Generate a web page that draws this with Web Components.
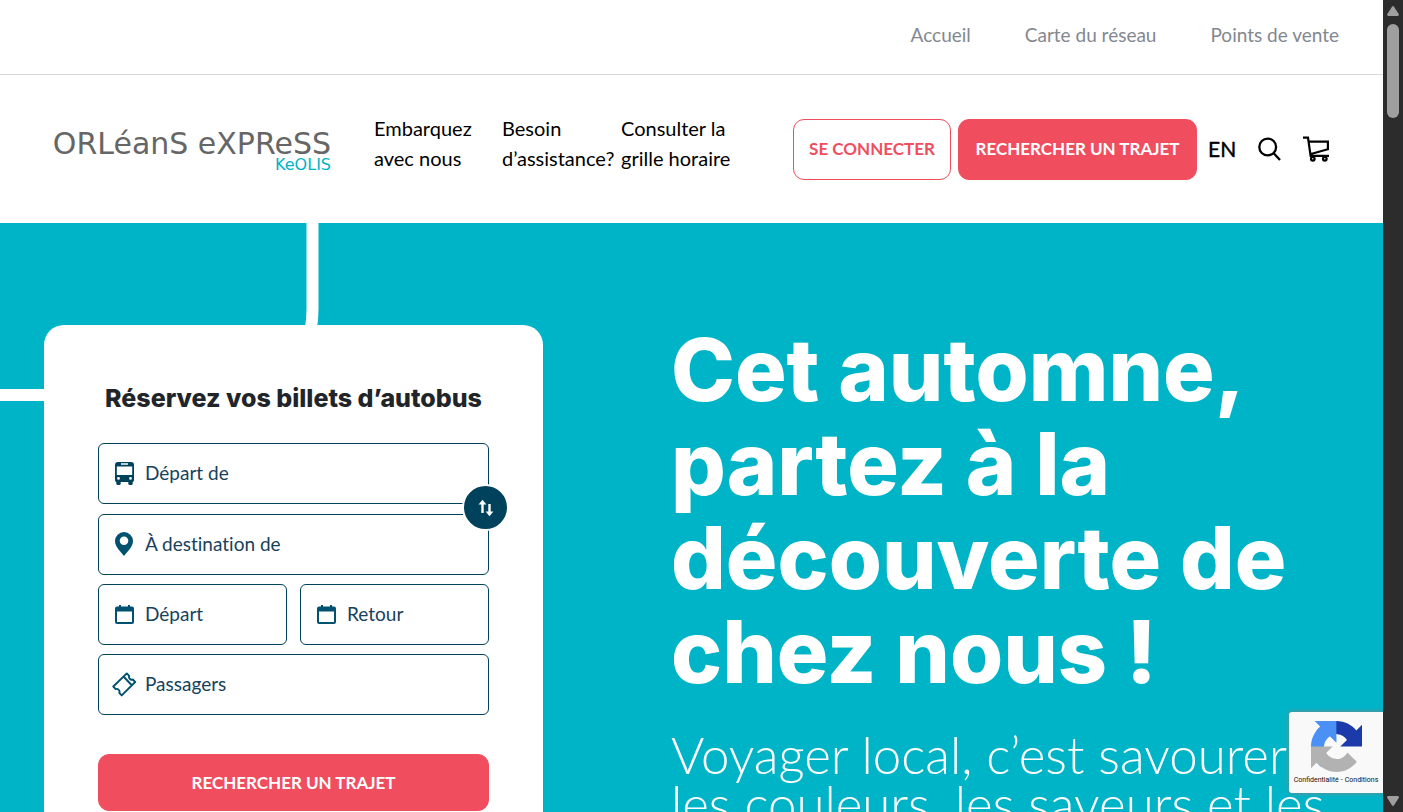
<!DOCTYPE html>
<html lang="fr">
<head>
<meta charset="utf-8">
<meta name="viewport" content="width=device-width, initial-scale=1">
<title>Orléans Express</title>
<style>
  html, body { margin: 0; height: 100%; }
  body { font-family: Lato, "Open Sans", sans-serif; font-size: 19px; line-height: 30px; font-variant-ligatures: none; color: #000; background: #fff; overflow: hidden; }
</style>
</head>
<body>
<oe-page></oe-page>

<script>
const define = (name, html) => {
  const tpl = document.createElement('template');
  tpl.innerHTML = html;
  customElements.define(name, class extends HTMLElement {
    constructor() {
      super();
      this.attachShadow({ mode: 'open' }).append(tpl.content.cloneNode(true));
    }
    connectedCallback() {
      const input = this.shadowRoot.querySelector('input[data-field]');
      if (input) {
        input.placeholder = this.getAttribute('label');
        input.setAttribute('aria-label', this.getAttribute('label'));
        input.name = this.getAttribute('name');
      }
    }
  });
};

define('oe-topbar', `
<style>
  :host { display: block; border-bottom: 1px solid #d6d8da; }
  nav { display: flex; justify-content: flex-end; align-items: center; gap: 54px; height: 70px; padding: 0 44px 4px; }
  a { color: #83888f; text-decoration: none; }
</style>
<nav aria-label="Liens secondaires">
  <a href="#accueil">Accueil</a><a href="#carte">Carte du réseau</a><a href="#points">Points de vente</a>
</nav>`);

define('oe-logo', `
<style>
  :host { display: block; }
  a { display: flex; flex-direction: column; align-items: flex-end; padding-top: 4px; text-decoration: none; font-family: "DejaVu Sans", sans-serif; color: #666; white-space: nowrap; }
  .name { font-size: 30px; line-height: 28px; }
  .sub { font-size: 16px; line-height: 14px; color: #00b4c7; }
</style>
<a href="#accueil"><span class="name">ORLéanS eXPReSS</span><span class="sub">KeOLIS</span></a>`);

define('oe-button', `
<style>
  :host { display: block; }
  button { box-sizing: border-box; width: 100%; height: var(--button-height, 61px); padding: 0 14px; border: 1px solid #f04e5e; border-radius: 11px; background: #f04e5e; color: #fff; font: 700 17px/24px Lato, sans-serif; white-space: nowrap; cursor: pointer; }
  :host([outline]) button { background: #fff; color: #f04e5e; }
</style>
<button type="button"><slot></slot></button>`);

define('oe-header', `
<style>
  :host { display: flex; align-items: center; box-sizing: border-box; min-height: 148px; padding: 0 53px 0 46px; }
  oe-logo { width: 285px; margin-right: 43px; }
  nav { display: grid; grid-template-columns: 128px 119px 120px; margin-right: auto; padding-bottom: 12px; font-size: 20px; }
  nav a { color: #000; text-decoration: none; }
  .actions { display: flex; align-items: center; gap: 7px; }
  oe-button:nth-child(1) { width: 158px; }
  oe-button:nth-child(2) { width: 239px; }
  .tools { display: flex; align-items: center; gap: 22px; margin-left: 11px; }
  .tools a { font-size: 21px; color: #000; text-decoration: none; width: 28px; -webkit-text-stroke: 0.4px #000; }
  .tools button { display: flex; padding: 0; border: 0; background: none; cursor: pointer; }
</style>
<oe-logo></oe-logo>
<nav aria-label="Navigation principale">
  <a href="#embarquez">Embarquez<br>avec nous</a>
  <a href="#assistance">Besoin<br>d’assistance?</a>
  <a href="#horaire">Consulter la<br>grille horaire</a>
</nav>
<div class="actions">
  <oe-button outline>SE CONNECTER</oe-button>
  <oe-button>RECHERCHER UN TRAJET</oe-button>
</div>
<div class="tools">
  <a href="#en" lang="en">EN</a>
  <button type="button" aria-label="Rechercher">
    <svg width="23" height="24" viewBox="0 0 23 24" fill="none" stroke="#000" stroke-width="2.3"><circle cx="9.700" cy="10" r="8.400"/><path d="M15.700 16.200 22 23"/></svg>
  </button>
  <button type="button" aria-label="Panier">
    <svg width="27" height="26" viewBox="0 0 27 26" fill="none" stroke="#000" stroke-width="2.2"><path d="M0 1.700h5l2.600 18.200H26M5.600 5.600h19.300v7.600L7 18.200"/><circle cx="9.800" cy="22.800" r="1.800"/><circle cx="21.800" cy="22.800" r="1.800"/></svg>
  </button>
</div>`);

define('oe-field', `
<style>
  :host { display: block; min-width: 0; }
  label { box-sizing: border-box; display: flex; align-items: center; gap: 8px; height: 61px; padding: 0 14px 0 13px; border: 1px solid #00425c; border-radius: 6px; background: #fff; }
  .icon { display: flex; flex: none; padding-bottom: 1px; }
  input { flex: 1; min-width: 0; padding: 0 0 2px; border: 0; outline: 0; background: none; color: #00425c; font: 400 19px/30px Lato, sans-serif; font-variant-ligatures: none; }
  input::placeholder { color: #17415c; opacity: 1; }
</style>
<label><span class="icon"><slot></slot></span><input type="text" data-field></label>`);

define('oe-booking', `
<style>
  :host { display: block; box-sizing: border-box; background: #fff; border-radius: 20px; padding: 54px 54px 40px; }
  h2 { margin: 0 0 25px; font-family: Inter, Lato, sans-serif; font-size: 25px; line-height: 39px; font-weight: 800; color: #212529; text-align: center; white-space: nowrap; }
  form { display: grid; grid-template-columns: 1fr 1fr; column-gap: 13px; row-gap: 9px; }
  .route { position: relative; grid-column: 1 / -1; display: grid; row-gap: 10px; }
  .swap { position: absolute; right: -20px; top: 50%; margin-top: -25px; box-sizing: border-box; width: 47px; height: 47px; padding: 0; border: 2px solid #fff; border-radius: 50%; background: #00425c; display: flex; align-items: center; justify-content: center; cursor: pointer; }
  .wide { grid-column: 1 / -1; }
  oe-button { grid-column: 1 / -1; margin-top: 30px; --button-height: 57px; }
</style>
<h2>Réservez vos billets d’autobus</h2>
<form>
  <div class="route">
    <oe-field label="Départ de" name="depart_de">
      <svg width="25" height="26" viewBox="0 0 25 26"><path fill="#00425c" fill-rule="evenodd" d="M6 2h13c2 0 3 1.200 3 3v15c0 1-.6 1.600-1.300 2v1.500a1.500 1.500 0 0 1-1.500 1.500h-1.400a1.500 1.500 0 0 1-1.500-1.500V22H8.700v1.500A1.500 1.500 0 0 1 7.200 25H5.800a1.500 1.500 0 0 1-1.500-1.500V22C3.600 21.600 3 21 3 20V5c0-1.800 1-3 3-3Zm3 1.300v1.500h7V3.300ZM4.800 6.500V15h15.400V6.500ZM6.500 17a1.400 1.400 0 1 0 0 2.800 1.400 1.400 0 0 0 0-2.800Zm12 0a1.400 1.400 0 1 0 0 2.800 1.400 1.400 0 0 0 0-2.800Z"/></svg>
    </oe-field>
    <oe-field label="À destination de" name="destination">
      <svg width="25" height="26" viewBox="0 0 25 26"><path fill="#005270" fill-rule="evenodd" d="M12 1a9 9 0 0 1 9 9c0 6-6 11-9 15-3-4-9-9-9-15a9 9 0 0 1 9-9Zm0 4.500a4.300 4.300 0 1 0 0 8.600 4.300 4.300 0 0 0 0-8.600Z"/></svg>
    </oe-field>
    <button class="swap" type="button" aria-label="Inverser le départ et la destination">
      <svg width="16" height="18" viewBox="0 0 16 18" fill="none" stroke="#fff" stroke-width="2.400"><path d="M4.500 14V4M11.500 5v10"/><path fill="#fff" stroke="none" d="M4.500.8 8.400 5.600H.6ZM11.500 17.200 7.600 12.400h7.800Z"/></svg>
    </button>
  </div>
  <oe-field label="Départ" name="date_depart">
    <svg width="25" height="26" viewBox="0 0 25 26"><path fill="#005270" fill-rule="evenodd" d="M7 4h2v1.500h7V4h2v1.500h2a2 2 0 0 1 2 2V21a2 2 0 0 1-2 2H5a2 2 0 0 1-2-2V7.500a2 2 0 0 1 2-2h2ZM5 10.500V21h15V10.500Z"/></svg>
  </oe-field>
  <oe-field label="Retour" name="date_retour">
    <svg width="25" height="26" viewBox="0 0 25 26"><path fill="#005270" fill-rule="evenodd" d="M7 4h2v1.500h7V4h2v1.500h2a2 2 0 0 1 2 2V21a2 2 0 0 1-2 2H5a2 2 0 0 1-2-2V7.500a2 2 0 0 1 2-2h2ZM5 10.500V21h15V10.500Z"/></svg>
  </oe-field>
  <oe-field class="wide" label="Passagers" name="passagers">
    <svg width="25" height="26" viewBox="0 0 25 26" fill="none" stroke="#005270" stroke-width="1.900" stroke-linejoin="round"><path d="M14.800 2.400 1.300 15.500l2.400 2.600c2.200-.8 4.600 1.500 3.600 3.800l2.400 2.500L23.200 11l-2.400-2.500c-2.300.8-4.500-1.500-3.600-3.700ZM12 6l7.500 8" /></svg>
  </oe-field>
  <oe-button>RECHERCHER UN TRAJET</oe-button>
</form>`);

define('oe-hero', `
<style>
  :host { position: relative; display: flex; align-items: flex-start; box-sizing: border-box; gap: 128px; padding: 100px 44px 60px; background: #00b4c7; color: #fff; overflow: hidden; }
  .road { position: absolute; left: 0; top: 0; }
  oe-booking { position: relative; flex: 0 0 499px; margin-top: 2px; }
  .copy { flex: 1; min-width: 0; }
  h1 { margin: 0; font-family: Inter, Lato, sans-serif; font-size: 86px; line-height: 94px; font-weight: 800; white-space: nowrap; }
  p { margin: 31px 0 0; font-size: 51px; line-height: 49px; font-weight: 300; white-space: nowrap; }
</style>
<svg class="road" width="340" height="200" viewBox="0 0 340 200" fill="none" stroke="#fff" stroke-width="12" aria-hidden="true"><path d="M312.500 0V86Q312.500 172 200 172H0"/></svg>
<oe-booking></oe-booking>
<div class="copy">
  <h1>Cet automne,<br>partez à la<br>découverte de<br>chez nous !</h1>
  <p>Voyager local, c’est savourer<br>les couleurs, les saveurs et les</p>
</div>`);

define('oe-recaptcha', `
<style>
  :host { display: flex; flex-direction: column; align-items: center; box-sizing: border-box; width: 94px; height: 81px; padding-top: 9px; border-radius: 3px 0 0 3px; background: #f9f9f9; box-shadow: 0 0 5px #808080; }
  .links { display: flex; gap: 2px; font: 400 7px/10px Roboto, sans-serif; color: #111; white-space: nowrap; margin-top: 3px; }
  a { color: inherit; text-decoration: none; }
</style>
<svg width="51" height="51" viewBox="0 0 64 64" aria-hidden="true"><path d="M64 31.955l-.013-1.370V4.687l-7.160 7.160C50.967 4.674 42.033.093 32.030.093c-10.400 0-19.662 4.960-25.490 12.638l11.736 11.860a15.550 15.550 0 0 1 4.754-5.334c2.050-1.600 4.952-2.906 9.008-2.906.490 0 .868.057 1.146.165 5.025.397 9.380 3.170 11.944 7.194l-8.307 8.307L64 31.953" fill="#1c3aa9"/><path d="M31.862.094l-1.370.013H4.594l7.160 7.160C4.580 13.147 0 22.080 0 32.083c0 10.400 4.960 19.662 12.638 25.490l11.860-11.736a15.550 15.550 0 0 1-5.334-4.754c-1.600-2.050-2.906-4.952-2.906-9.008 0-.490.057-.868.165-1.146.397-5.025 3.170-9.380 7.194-11.944l8.307 8.307L31.860.095" fill="#4a90f5"/><path d="M.001 32.045l.013 1.370v25.898l7.160-7.160c5.860 7.173 14.794 11.754 24.797 11.754 10.400 0 19.662-4.960 25.490-12.638l-11.736-11.860a15.550 15.550 0 0 1-4.754 5.334c-2.050 1.600-4.952 2.906-9.008 2.906-.490 0-.868-.057-1.146-.165-5.025-.397-9.380-3.170-11.944-7.194l8.307-8.307-27.180.060" fill="#b2b2b2"/></svg>
<div class="links"><a href="#confidentialite">Confidentialité</a><span>-</span><a href="#conditions">Conditions</a></div>`);

define('oe-scrollbar', `
<style>
  :host { display: flex; flex-direction: column; align-items: center; box-sizing: border-box; background: #2c2c2c; padding: 6px 0; }
  .thumb { width: 12px; height: 94px; margin: 8px 0 auto; border-radius: 6px; background: #9f9f9f; }
</style>
<svg width="12" height="10" viewBox="0 0 12 10"><path d="M5 .7q1-1.200 2 0L11.700 8q.6 1.800-1 2H1.300q-1.600-.2-1-2Z" fill="#9f9f9f"/></svg>
<div class="thumb"></div>
<svg width="12" height="10" viewBox="0 0 12 10"><path d="M5 9.300q1 1.200 2 0L11.700 2q.6-1.800-1-2H1.300q-1.600.2-1 2Z" fill="#9f9f9f"/></svg>`);

define('oe-page', `
<style>
  :host { display: grid; grid-template-columns: minmax(0, 1fr) 20px; height: 100vh; }
  .view { position: relative; overflow: hidden; }
  oe-recaptcha { position: absolute; right: 0; bottom: 19px; }
</style>
<div class="view">
  <oe-topbar></oe-topbar>
  <oe-header></oe-header>
  <main><oe-hero></oe-hero></main>
  <oe-recaptcha></oe-recaptcha>
</div>
<oe-scrollbar aria-hidden="true"></oe-scrollbar>`);
</script>
</body>
</html>
